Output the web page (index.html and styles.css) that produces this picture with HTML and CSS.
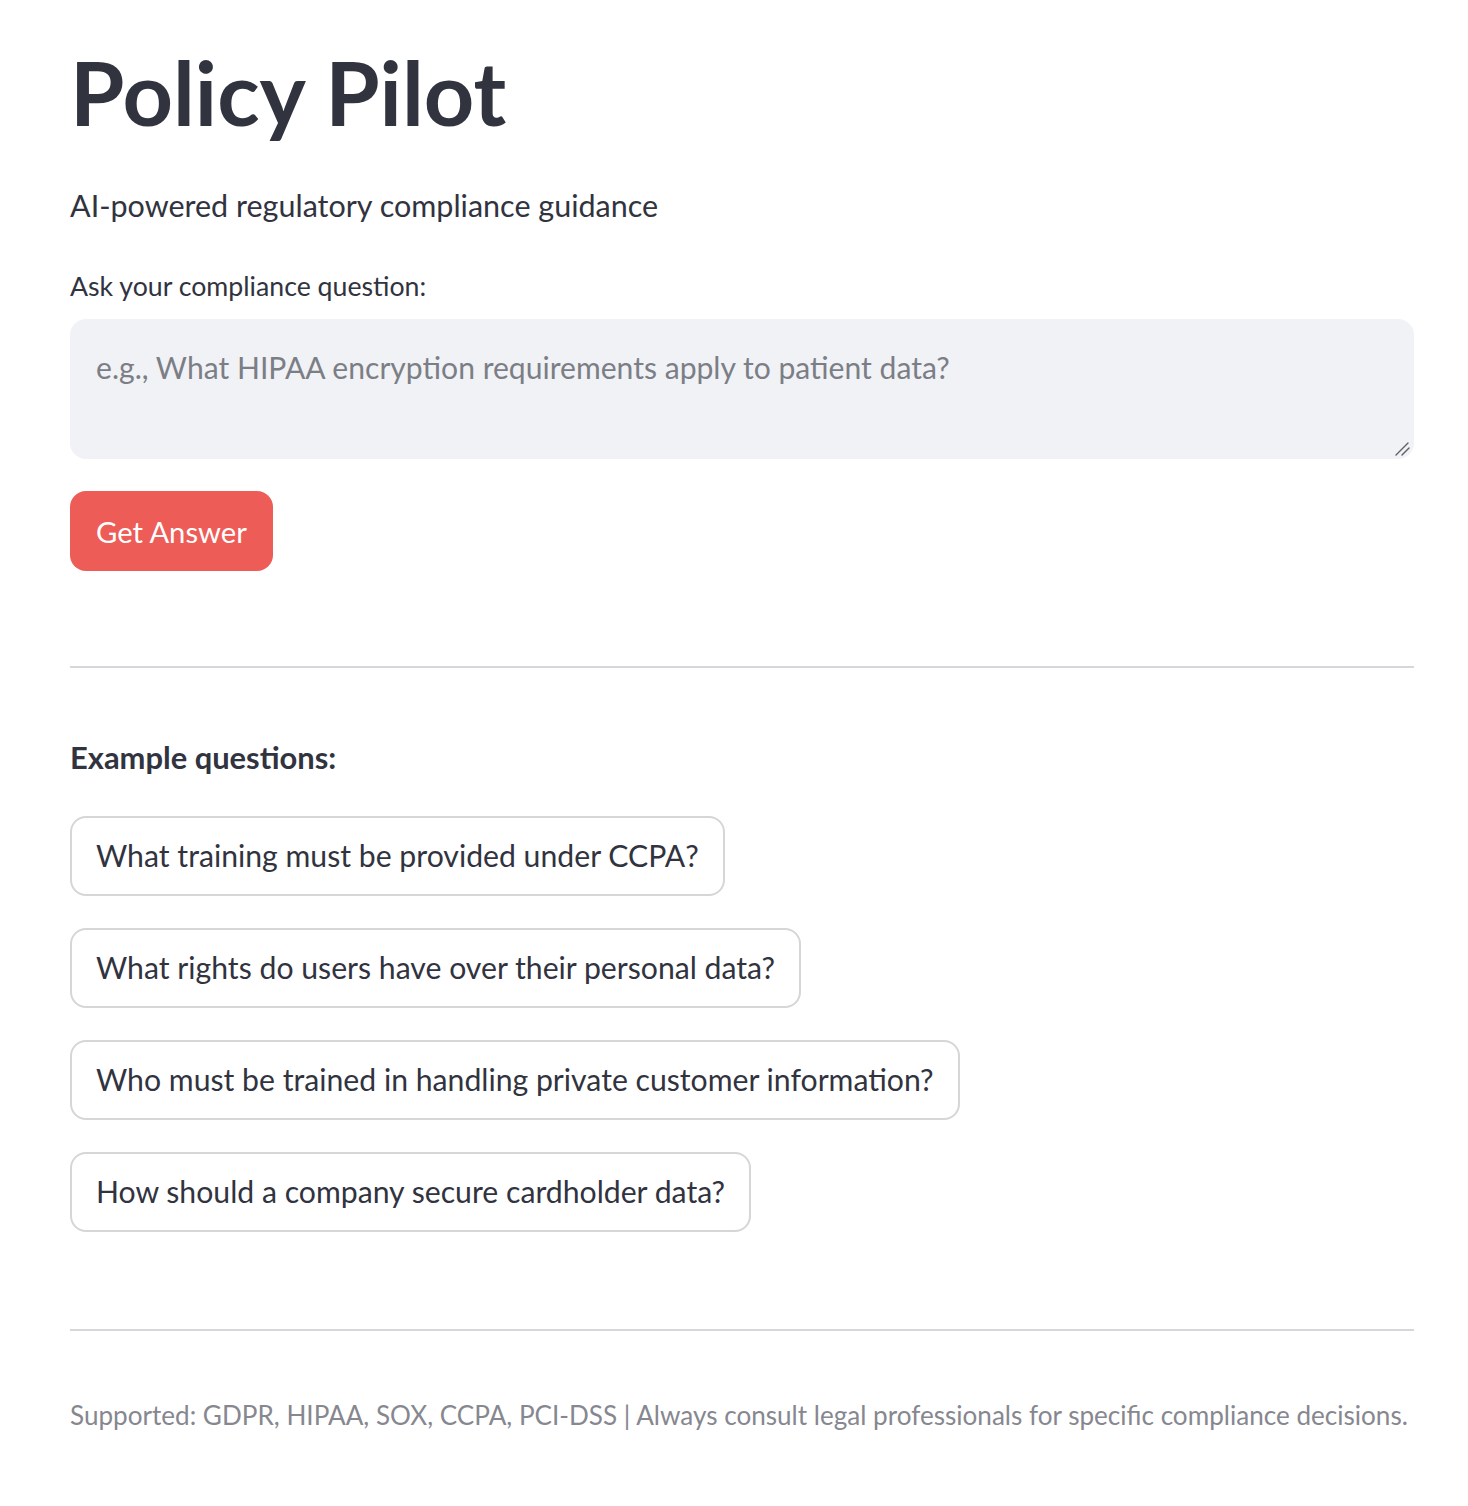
FILE: index.html
```html
<!DOCTYPE html>
<html lang="en">
<head>
<meta charset="utf-8">
<title>Policy Pilot</title>
<link rel="stylesheet" href="styles.css">
</head>
<body>
<main class="page">
  <h1 class="title">Policy Pilot</h1>
  <p class="subtitle">AI-powered regulatory compliance guidance</p>
  <label class="field-label" for="q">Ask your compliance question:</label>
  <div class="textarea-wrap">
    <textarea id="q" class="question" placeholder="e.g., What HIPAA encryption requirements apply to patient data?"></textarea>
    <svg class="grip" width="16" height="16" viewBox="0 0 16 16" aria-hidden="true">
      <line x1="2" y1="15" x2="14" y2="3" stroke="#5f6068" stroke-width="1.4" stroke-linecap="round"/>
      <line x1="8" y1="15" x2="15" y2="8" stroke="#5f6068" stroke-width="1.4" stroke-linecap="round"/>
    </svg>
  </div>
  <div class="actions">
    <button class="btn-primary" type="button">Get Answer</button>
  </div>
  <hr class="divider divider-top">
  <h3 class="examples-heading">Example questions:</h3>
  <div class="examples">
    <button class="btn-secondary" type="button">What training must be provided under CCPA?</button>
    <button class="btn-secondary" type="button">What rights do users have over their personal data?</button>
    <button class="btn-secondary" type="button">Who must be trained in handling private customer information?</button>
    <button class="btn-secondary" type="button">How should a company secure cardholder data?</button>
  </div>
  <hr class="divider divider-bottom">
  <p class="footer">Supported: GDPR, HIPAA, SOX, CCPA, PCI-DSS | Always consult legal professionals for specific compliance decisions.</p>
</main>
</body>
</html>
```

FILE: styles.css
```css
* { box-sizing: border-box; }

html, body {
  margin: 0;
  padding: 0;
  background: #ffffff;
}

body {
  font-family: "Source Sans Pro", "Lato", "Noto Sans", sans-serif;
  color: #31333f;
}

.page {
  width: 1468px;
  padding: 44px 54px 0 70px;
  display: flex;
  flex-direction: column;
  align-items: flex-start;
}

.title {
  margin: 0;
  font-size: 88px;
  line-height: 96px;
  font-weight: 700;
}

.subtitle {
  margin: 41px 0 0;
  font-size: 30.5px;
  line-height: 48px;
}

.field-label {
  margin-top: 36px;
  font-size: 26.7px;
  line-height: 42px;
}

.textarea-wrap {
  position: relative;
  margin-top: 12px;
  width: 100%;
}

.question {
  display: block;
  width: 100%;
  height: 140px;
  border: 2px solid #f0f2f6;
  border-radius: 16px;
  background: #f0f2f6;
  padding: 26px 24px;
  font-family: inherit;
  font-size: 30.1px;
  line-height: 40px;
  color: #31333f;
  resize: none;
  outline: none;
}

.question::placeholder {
  color: #7c7e86;
  opacity: 1;
}

.grip {
  position: absolute;
  right: 4px;
  bottom: 3px;
  pointer-events: none;
}

.actions {
  margin-top: 32px;
}

.btn-primary {
  height: 80px;
  padding: 0 26px;
  border: none;
  border-radius: 16px;
  background: #ee5c57;
  color: #ffffff;
  font-family: inherit;
  font-size: 29.2px;
}

.divider {
  width: 100%;
  margin: 0;
  border: none;
  border-top: 2px solid #d6d7da;
}

.divider-top {
  margin-top: 95px;
}

.examples-heading {
  margin: 66px 0 0;
  font-size: 30.9px;
  line-height: 48px;
  font-weight: 700;
}

.examples {
  margin-top: 34px;
  display: flex;
  flex-direction: column;
  align-items: flex-start;
  gap: 32px;
}

.btn-secondary {
  height: 80px;
  padding: 0 24px 3px;
  border: 2px solid #d6d6d9;
  border-radius: 16px;
  background: #ffffff;
  color: #31333f;
  font-family: inherit;
  font-size: 30.2px;
}

.divider-bottom {
  margin-top: 97px;
}

.footer {
  margin: 62px 0 0;
  font-size: 26.1px;
  line-height: 44px;
  color: #86878f;
}
```
